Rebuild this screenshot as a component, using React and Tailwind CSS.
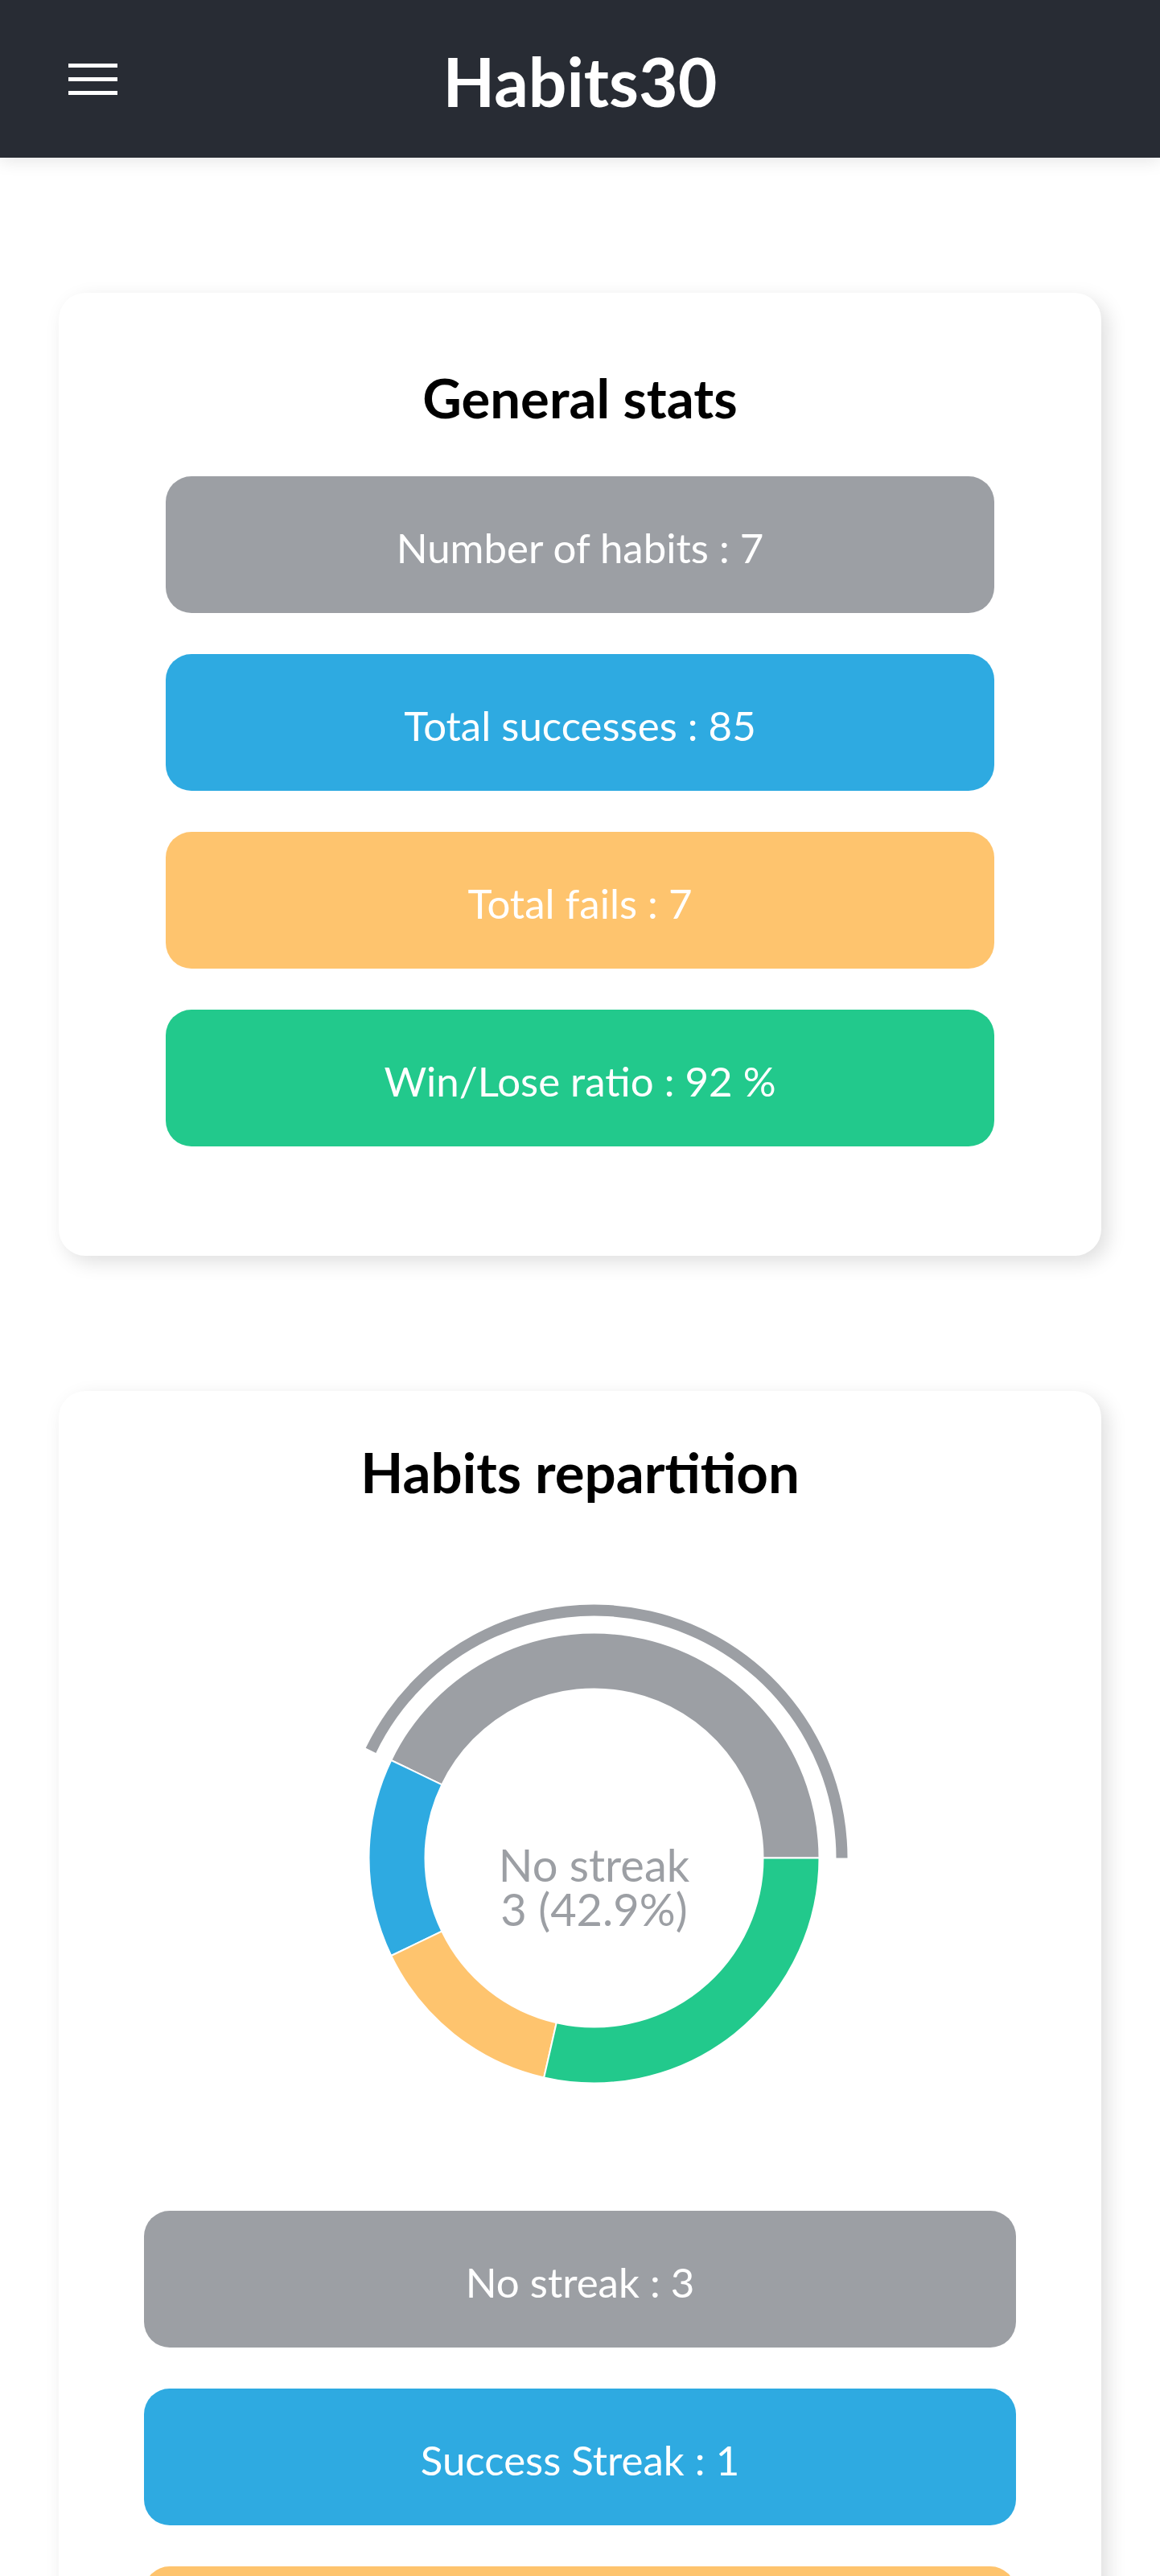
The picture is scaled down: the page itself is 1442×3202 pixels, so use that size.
import React from "react";

const GRAY = "#9c9fa4";
const BLUE = "#2eaae1";
const ORANGE = "#fec46e";
const GREEN = "#22c98c";

const generalStats = [
  { label: "Number of habits : 7", color: "bg-[#9c9fa4]" },
  { label: "Total successes : 85", color: "bg-[#2eaae1]" },
  { label: "Total fails : 7", color: "bg-[#fec46e]" },
  { label: "Win/Lose ratio : 92 %", color: "bg-[#22c98c]" },
];

const repartition = [
  { label: "No streak : 3", color: "bg-[#9c9fa4]" },
  { label: "Success Streak : 1", color: "bg-[#2eaae1]" },
  { label: "Fail Streak : 1", color: "bg-[#fec46e]" },
  { label: "Great Streak : 2", color: "bg-[#22c98c]" },
];

// doughnut slices, angles counter-clockwise from 3 o'clock
const slices = [
  { value: 3, color: GRAY },
  { value: 1, color: BLUE },
  { value: 1, color: ORANGE },
  { value: 2, color: GREEN },
];

const point = (cx, cy, r, deg) => {
  const a = (deg * Math.PI) / 180;
  return [cx + r * Math.cos(a), cy - r * Math.sin(a)];
};

const ringPath = (cx, cy, r1, r2, a1, a2) => {
  const large = a2 - a1 > 180 ? 1 : 0;
  const [ox1, oy1] = point(cx, cy, r2, a1);
  const [ox2, oy2] = point(cx, cy, r2, a2);
  const [ix2, iy2] = point(cx, cy, r1, a2);
  const [ix1, iy1] = point(cx, cy, r1, a1);
  return `M${ox1} ${oy1} A${r2} ${r2} 0 ${large} 0 ${ox2} ${oy2} L${ix2} ${iy2} A${r1} ${r1} 0 ${large} 1 ${ix1} ${iy1} Z`;
};

const Doughnut = () => {
  const cx = 367.5;
  const cy = 358.5;
  const total = slices.reduce((s, x) => s + x.value, 0);
  let start = 0;
  const arcs = slices.map((s) => {
    const end = start + (s.value / total) * 360;
    const arc = { ...s, a1: start, a2: end };
    start = end;
    return arc;
  });

  return (
    <svg width="700" height="700" viewBox="0 0 700 700" className="mt-[87px]">
      {arcs.map((a, i) => (
        <path
          key={i}
          d={ringPath(cx, cy, 210, 280, a.a1, a.a2)}
          fill={a.color}
          stroke="#ffffff"
          strokeWidth="2"
        />
      ))}
      <path d={ringPath(cx, cy, 301, 315, arcs[0].a1, arcs[0].a2)} fill={GRAY} />
      <text
        x={cx}
        y={cy + 29.5}
        textAnchor="middle"
        fill={GRAY}
        fontFamily="Lato, sans-serif"
        fontSize="56"
      >
        No streak
      </text>
      <text
        x={cx}
        y={cy + 84.5}
        textAnchor="middle"
        fill={GRAY}
        fontFamily="Lato, sans-serif"
        fontSize="56"
      >
        3 (42.9%)
      </text>
    </svg>
  );
};

const StatButton = ({ label, color }) => (
  <div
    className={`${color} h-[170px] rounded-[32px] flex items-center justify-center text-white text-[51px] leading-none pt-[6px]`}
  >
    {label}
  </div>
);

export default function App() {
  return (
    <div className="min-h-screen bg-white font-['Lato',sans-serif] text-black">
      <header className="relative z-10 h-[196px] bg-[#282c34] grid grid-cols-[1fr_auto_1fr] items-center px-[85px] shadow-[0_4px_20px_rgba(0,0,0,0.1)]">
        <button className="flex flex-col gap-[12px] w-[61px]">
          <span className="block h-[5px] w-[61px] bg-white" />
          <span className="block h-[5px] w-[61px] bg-white" />
          <span className="block h-[5px] w-[61px] bg-white" />
        </button>
        <h1 className="text-white text-[84px] font-bold leading-none mt-[6px]">Habits30</h1>
        <div />
      </header>

      <main className="flex flex-col gap-[168px] pt-[168px] pb-[168px]">
        <section className="mx-[73px] rounded-[33px] bg-white shadow-[8px_8px_24px_rgba(0,0,0,0.13)] pt-[97px] pb-[136px] flex flex-col items-center">
          <h2 className="text-[67px] font-bold leading-none">General stats</h2>
          <div className="mt-[64px] w-[1030px] flex flex-col gap-[51px]">
            {generalStats.map((s) => (
              <StatButton key={s.label} {...s} />
            ))}
          </div>
        </section>

        <section className="mx-[73px] rounded-[33px] bg-white shadow-[8px_8px_24px_rgba(0,0,0,0.13)] pt-[66px] pb-[136px] flex flex-col items-center">
          <h2 className="text-[69px] font-bold leading-none">Habits repartition</h2>
          <Doughnut />
          <div className="mt-[97px] w-[1084px] flex flex-col gap-[51px]">
            {repartition.map((s) => (
              <StatButton key={s.label} {...s} />
            ))}
          </div>
        </section>
      </main>
    </div>
  );
}
